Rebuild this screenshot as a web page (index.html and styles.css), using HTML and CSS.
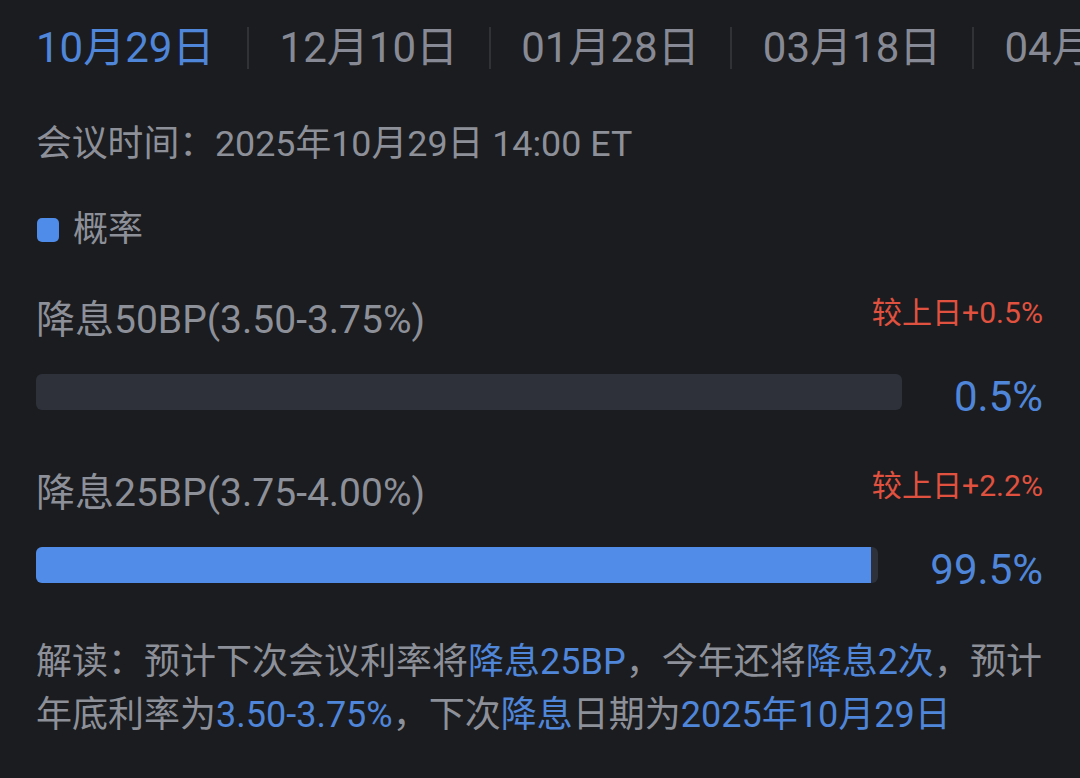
FILE: index.html
```html
<!DOCTYPE html>
<html lang="zh-CN">
<head>
<meta charset="utf-8">
<title>降息概率</title>
<link rel="stylesheet" href="styles.css">
</head>
<body>
<div class="page">
  <div class="tabs">
    <span class="tab tab-active">10月29日</span>
    <span class="sep"></span>
    <span class="tab">12月10日</span>
    <span class="sep"></span>
    <span class="tab">01月28日</span>
    <span class="sep"></span>
    <span class="tab">03月18日</span>
    <span class="sep"></span>
    <span class="tab">04月29日</span>
  </div>

  <div class="meeting">会议时间：2025年10月29日 14:00 ET</div>

  <div class="legend"><span class="legend-dot"></span><span>概率</span></div>

  <div class="item">
    <div class="item-head">
      <span class="item-label">降息50BP(3.50-3.75%)</span>
      <span class="item-change">较上日+0.5%</span>
    </div>
    <div class="item-bar-row">
      <div class="track"></div>
      <span class="pct">0.5%</span>
    </div>
  </div>

  <div class="item">
    <div class="item-head">
      <span class="item-label">降息25BP(3.75-4.00%)</span>
      <span class="item-change">较上日+2.2%</span>
    </div>
    <div class="item-bar-row">
      <div class="track"><div class="fill" style="width:99.1%"></div></div>
      <span class="pct">99.5%</span>
    </div>
  </div>

  <p class="reading">解读：预计下次会议利率将<span class="hl">降息25BP</span>，今年还将<span class="hl">降息2次</span>，预计年底利率为<span class="hl">3.50-3.75%</span>，下次<span class="hl">降息</span>日期为<span class="hl">2025年10月29日</span></p>
</div>
</body>
</html>
```

FILE: styles.css
```css
html, body {
  margin: 0;
  padding: 0;
  background: #1b1c1f;
}

body {
  width: 1080px;
  height: 778px;
  overflow: hidden;
  font-family: Roboto, "Noto Sans CJK SC", sans-serif;
  color: #8d9099;
}

.page {
  padding: 0 37px 0 36px;
}

.tabs {
  display: flex;
  align-items: center;
  height: 96px;
  white-space: nowrap;
  overflow: hidden;
  margin-right: -37px;
}

.tab {
  font-size: 42px;
  line-height: 1;
  color: #878a94;
  padding: 0 30.6px;
  flex: none;
}

.tab:first-child {
  padding-left: 0;
  padding-right: 32.6px;
}

.tab-active {
  color: #4f86da;
}

.sep {
  flex: none;
  width: 2px;
  height: 42px;
  background: #303236;
}

.meeting {
  margin-top: 24px;
  font-size: 35.8px;
  line-height: 48px;
}

.legend {
  margin-top: 38px;
  display: flex;
  align-items: center;
  font-size: 35px;
  line-height: 48px;
}

.legend-dot {
  width: 22px;
  height: 24px;
  border-radius: 5px;
  background: #4f8be8;
  margin-right: 14px;
  margin-left: 1px;
}

.item {
  margin-top: 42px;
}

.item + .item {
  margin-top: 53px;
}

.item-head {
  display: flex;
  justify-content: space-between;
  align-items: flex-start;
}

.item-label {
  font-size: 39px;
  line-height: 48px;
}

.item-change {
  font-size: 30.1px;
  line-height: 34px;
  color: #e0523f;
}

.item-bar-row {
  margin-top: 24px;
  display: flex;
  align-items: center;
  height: 48px;
}

.track {
  flex: 1;
  height: 36px;
  border-radius: 6px;
  background: #2e3139;
  overflow: hidden;
}

.fill {
  height: 100%;
  background: #518ce9;
}

.pct {
  margin-left: 52px;
  padding-top: 10px;
  font-size: 42px;
  line-height: 48px;
  color: #4f86da;
}

.reading {
  margin: 47px -6px 0 0;
  font-size: 36px;
  line-height: 53px;
}

.hl {
  color: #4f86da;
}
```
